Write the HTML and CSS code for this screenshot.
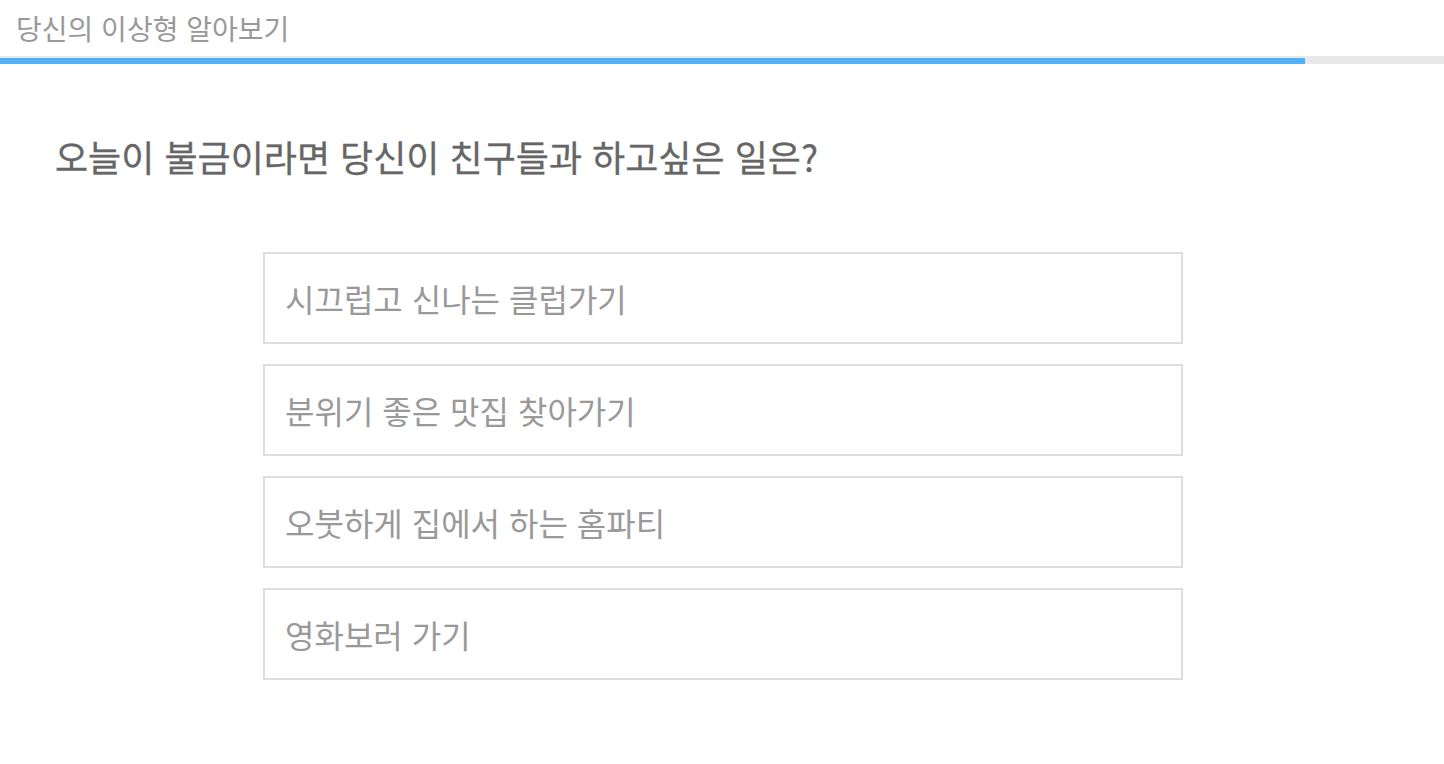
FILE: index.html
```html
<!DOCTYPE html>
<html lang="ko">
<head>
<meta charset="utf-8">
<title>당신의 이상형 알아보기</title>
<link rel="stylesheet" href="styles.css">
</head>
<body>
  <header class="top">
    <h1 class="title">당신의 이상형 알아보기</h1>
  </header>
  <div class="progress"><div class="progress-fill" style="width: 90.37%"></div></div>
  <main class="quiz">
    <h2 class="question">오늘이 불금이라면 당신이 친구들과 하고싶은 일은?</h2>
    <ul class="options">
      <li class="option">시끄럽고 신나는 클럽가기</li>
      <li class="option">분위기 좋은 맛집 찾아가기</li>
      <li class="option">오붓하게 집에서 하는 홈파티</li>
      <li class="option">영화보러 가기</li>
    </ul>
  </main>
</body>
</html>
```

FILE: styles.css
```css
* { box-sizing: border-box; }
html, body {
  margin: 0;
  padding: 0;
  background: #fff;
  font-family: "Noto Sans CJK KR", "Noto Sans", sans-serif;
}
.top {
  height: 56px;
  display: flex;
  align-items: center;
  padding-left: 16px;
}
.title {
  margin: 0;
  font-size: 28px;
  font-weight: 400;
  color: #999;
  line-height: 1;
}
.progress {
  height: 8px;
  background: #e8e8e8;
  display: flex;
  align-items: flex-end;
}
.progress-fill {
  height: 6px;
  background: #52b1f6;
}
.quiz {
  padding: 0 55px;
}
.question {
  margin: 67px 0 0;
  font-size: 36px;
  font-weight: 400;
  color: #666;
  line-height: 50px;
  -webkit-text-stroke: 0.3px #666;
}
.options {
  list-style: none;
  margin: 71px auto 0;
  padding: 0;
  width: 920px;
  display: flex;
  flex-direction: column;
  gap: 20px;
  transform: translateX(1px);
}
.option {
  height: 92px;
  border: 2px solid #ddd;
  display: flex;
  align-items: center;
  padding-left: 20px;
  font-size: 32px;
  color: #999;
}
```
